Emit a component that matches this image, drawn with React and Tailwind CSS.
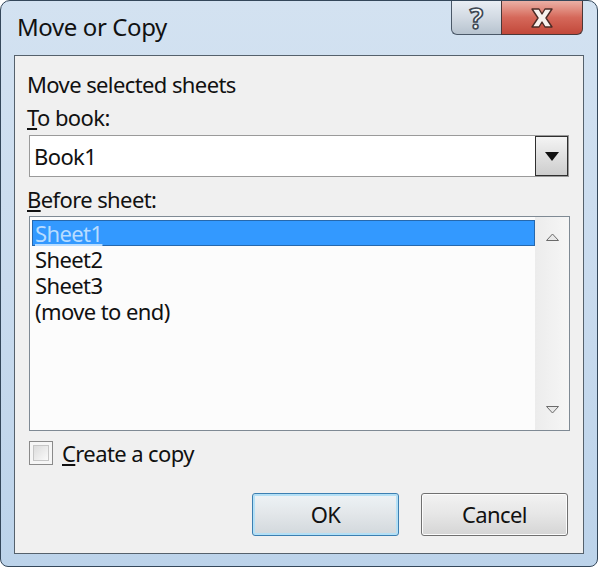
import React, { useState } from "react";

const font = { fontFamily: '"Noto Sans", "Open Sans", Arial, sans-serif' };

function TitleButtons() {
  return (
    <div className="flex h-[34px] mr-[14px]">
      <div className="w-[50px] h-full rounded-bl-[6px] border border-t-0 border-[#4a5868] border-r-0 bg-gradient-to-b from-[#e9eef4] via-[#d2dae3] to-[#b7c3cf] flex items-center justify-center">
        <span
          className="text-[28px] font-bold text-[#f4f6f8] leading-[30px]"
          style={{ WebkitTextStroke: "1.6px #3d4752" }}
        >
          ?
        </span>
      </div>
      <div className="w-[82px] h-full rounded-br-[6px] border border-t-0 border-[#4a3838] bg-gradient-to-b from-[#eab0a6] via-[#d5685a] to-[#c2483a] flex items-center justify-center">
        <svg width="30" height="22" viewBox="0 0 30 22">
          <path
            d="M5 2 L12 2 L15 7 L18 2 L25 2 L19 11 L25 20 L18 20 L15 15 L12 20 L5 20 L11 11 Z"
            fill="#f7f1ee"
            stroke="#4b2b26"
            strokeWidth="1.4"
            strokeLinejoin="round"
          />
        </svg>
      </div>
    </div>
  );
}

function ComboBox() {
  return (
    <div className="ml-[14px] mr-[14px] h-[42px] border border-[#9a9a9a] bg-white flex items-center">
      <span className="flex-1 pl-[4px] text-[22px] tracking-[-0.6px] text-[#111]">Book1</span>
      <div className="w-[33px] h-[40px] border border-[#2f2f2f] bg-gradient-to-b from-[#f4f4f4] to-[#cdcdcd] flex items-center justify-center">
        <svg width="14" height="9" viewBox="0 0 14 9">
          <path d="M0 0 L14 0 L7 9 Z" fill="#111" />
        </svg>
      </div>
    </div>
  );
}

function SheetList() {
  const [selected, setSelected] = useState(0);
  const items = ["Sheet1", "Sheet2", "Sheet3", "(move to end)"];
  return (
    <div className="ml-[14px] mr-[13px] h-[215px] border border-[#7f8a94] bg-[#fcfcfc] flex">
      <div className="flex-1 pl-[2px] pt-[3px]">
        {items.map((it, i) => (
          <div
            key={it}
            onClick={() => setSelected(i)}
            className={
              i === selected
                ? "h-[26px] leading-[24px] pl-[2px] bg-[#3399ff] border border-[#2668ad] text-[#b8dcff] underline text-[22px] tracking-[-0.6px]"
                : "h-[26px] leading-[26px] pl-[3px] text-[22px] tracking-[-0.6px] text-[#111]"
            }
          >
            {it}
          </div>
        ))}
      </div>
      <div className="w-[34px] bg-gradient-to-r from-[#ececec] to-[#f6f6f6] flex flex-col justify-between items-center py-[16px]">
        <svg width="13" height="8" viewBox="0 0 13 8">
          <path d="M0.5 7.5 L6.5 1 L12.5 7.5 Z" fill="#e8e8e8" stroke="#6a6a6a" strokeWidth="1" />
        </svg>
        <svg width="13" height="8" viewBox="0 0 13 8">
          <path d="M0.5 0.5 L6.5 7 L12.5 0.5 Z" fill="#e8e8e8" stroke="#6a6a6a" strokeWidth="1" />
        </svg>
      </div>
    </div>
  );
}

export default function App() {
  const [copy, setCopy] = useState(false);
  return (
    <div className="w-[600px] h-[568px] bg-white" style={font}>
      <div className="w-[598px] h-[567px] rounded-t-[10px] rounded-b-[8px] border border-[#34475a] bg-gradient-to-b from-[#d3e2f1] via-[#c9dbee] to-[#bcd3ea] flex flex-col">
        <div className="h-[54px] flex items-start justify-between">
          <span className="pl-[16px] pt-[11px] text-[24px] leading-[30px] tracking-[-0.4px] text-[#111]">Move or Copy</span>
          <TitleButtons />
        </div>
        <div className="mx-[13px] h-[499px] border border-[#55616c] bg-[#f0f0f0] flex flex-col text-[22px] tracking-[-0.6px] text-[#111]">
          <div className="mt-[14px] pl-[12px] h-[28px] leading-[28px]">Move selected sheets</div>
          <div className="mt-[5px] pl-[12px] h-[28px] leading-[28px]">
            <span className="underline">T</span>o book:
          </div>
          <div className="mt-[4px]">
            <ComboBox />
          </div>
          <div className="mt-[8px] pl-[12px] h-[28px] leading-[28px]">
            <span className="underline">B</span>efore sheet:
          </div>
          <div className="mt-[3px]">
            <SheetList />
          </div>
          <label className="mt-[10px] ml-[14px] h-[24px] flex items-center gap-[9px] cursor-pointer">
            <span
              onClick={() => setCopy(!copy)}
              className="w-[24px] h-[24px] border border-[#8a8a8a] bg-[#f6f6f6] p-[3px] flex"
            >
              <span className="flex-1 border border-[#c6c6c6] bg-gradient-to-br from-[#dcdcdc] to-[#fafafa] flex items-center justify-center text-[14px] leading-none">
                {copy ? "✓" : ""}
              </span>
            </span>
            <span>
              <span className="underline">C</span>reate a copy
            </span>
          </label>
          <div className="mt-[28px] mr-[15px] flex justify-end gap-[22px]">
            <button className="w-[147px] h-[43px] rounded-[3px] border border-[#3c7fb1] bg-gradient-to-b from-[#eef3f6] via-[#e2e6e9] to-[#d2d8dc] shadow-[inset_0_0_0_2px_#b4e0f6] text-[22px] tracking-[-0.6px] text-[#111]">
              OK
            </button>
            <button className="w-[147px] h-[43px] rounded-[3px] border border-[#707070] bg-gradient-to-b from-[#f2f2f2] via-[#e6e6e6] to-[#d5d5d5] shadow-[inset_0_0_0_1px_#fcfcfc] text-[22px] tracking-[-0.6px] text-[#111]">
              Cancel
            </button>
          </div>
        </div>
      </div>
    </div>
  );
}
